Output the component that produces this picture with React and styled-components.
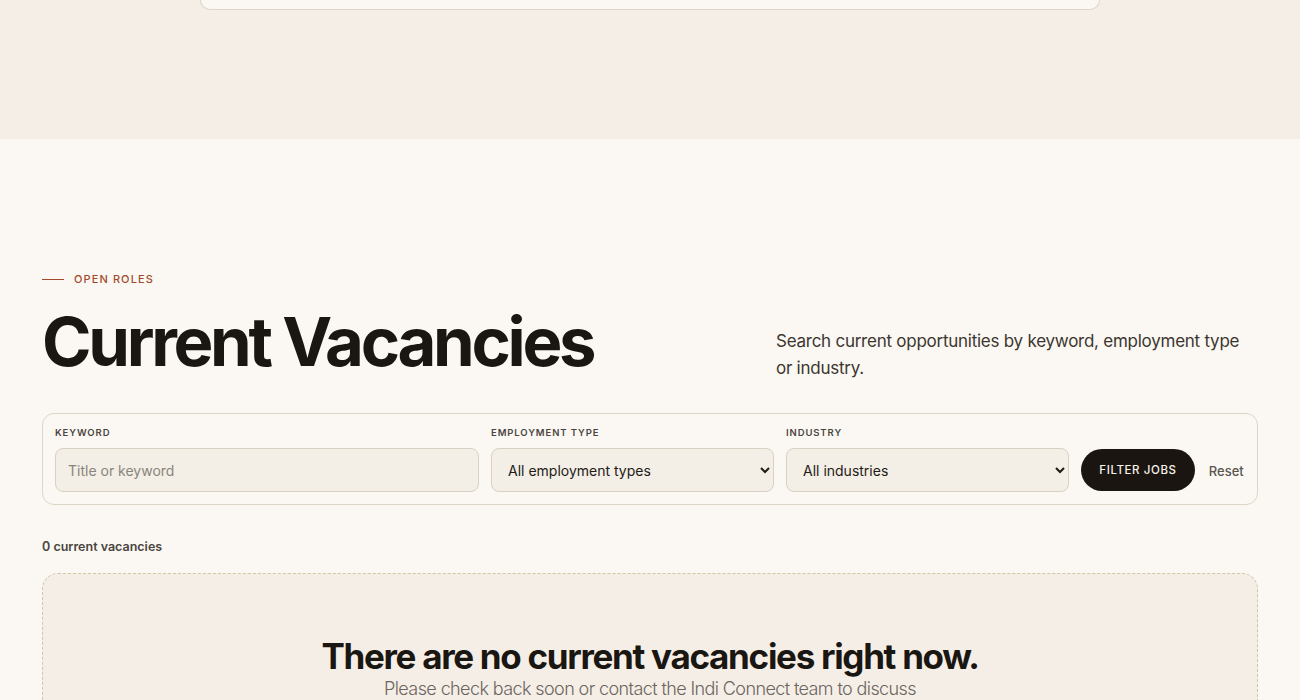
import React from "react";
import styled, { createGlobalStyle } from "styled-components";

const Global = createGlobalStyle`
  html, body { margin: 0; padding: 0; }
  body {
    background: #fbf8f3;
    font-family: Inter, "Noto Sans", sans-serif;
    color: #1a1612;
  }
  * { box-sizing: border-box; }
`;

const TopBand = styled.div`
  height: 139px;
  background: #f5eee7;
  display: flex;
  justify-content: center;
`;

const TopCard = styled.div`
  width: 900px;
  height: 10px;
  margin-left: -1px;
  background: #fbf8f3;
  border: 1px solid #dcd6c4;
  border-top: none;
  border-radius: 0 0 20px 20px;
`;

const Section = styled.section`
  padding: 131px 42px 0;
`;

const Eyebrow = styled.div`
  display: flex;
  align-items: center;
  gap: 10px;
  font-size: 11px;
  font-weight: 500;
  letter-spacing: 1.1px;
  color: #a24a2c;
  text-transform: uppercase;
  height: 18px;
`;

const EyebrowLine = styled.span`
  width: 22px;
  height: 1px;
  background: #a24a2c;
`;

const HeaderRow = styled.div`
  display: flex;
  justify-content: space-between;
  align-items: flex-start;
  margin-top: 14px;
`;

const Title = styled.h1`
  margin: 0;
  font-size: 67px;
  line-height: 80px;
  font-weight: 700;
  letter-spacing: -3.3px;
  color: #1a1612;
`;

const Lede = styled.p`
  margin: 26px 12px 0 0;
  width: 470px;
  font-size: 17px;
  line-height: 27px;
  color: #3b362f;
  letter-spacing: -0.25px;
`;

const FilterPanel = styled.form`
  margin-top: 31px;
  border: 1px solid #ddd6c6;
  border-radius: 12px;
  padding: 13px 12px 12px 12px;
  display: grid;
  grid-template-columns: 424px 283px 283px auto auto;
  column-gap: 12px;
  align-items: end;
`;

const Field = styled.label`
  display: flex;
  flex-direction: column;
  gap: 9px;
`;

const FieldLabel = styled.span`
  font-size: 9.5px;
  font-weight: 600;
  letter-spacing: 0.9px;
  text-transform: uppercase;
  color: #4a4540;
  line-height: 12px;
`;

const controlBase = `
  height: 44px;
  width: 100%;
  border: 1px solid #d9d1c1;
  border-radius: 8px;
  background: #f3eee6;
  font-family: Inter, "Noto Sans", sans-serif;
  font-size: 14px;
  color: #1f1b17;
  outline: none;
`;

const TextInput = styled.input`
  ${controlBase}
  padding: 0 12px;
  &::placeholder { color: #8a847b; }
`;

const Select = styled.select`
  ${controlBase}
  padding: 0 8px 0 12px;
`;

const FilterButton = styled.button`
  height: 42px;
  margin-bottom: 1px;
  padding: 0 18px;
  width: 114px;
  border: none;
  border-radius: 999px;
  background: #1a1511;
  color: #f7f2ea;
  font-family: Inter, "Noto Sans", sans-serif;
  font-size: 11.5px;
  font-weight: 500;
  letter-spacing: 0.6px;
  text-transform: uppercase;
`;

const ResetLink = styled.button`
  height: 42px;
  padding: 0 1px;
  border: none;
  background: none;
  color: #5a554e;
  font-family: Inter, "Noto Sans", sans-serif;
  font-size: 13px;
  font-weight: 500;
`;

const Count = styled.div`
  margin-top: 34px;
  font-size: 12.5px;
  font-weight: 600;
  color: #4a4540;
  line-height: 16px;
`;

const EmptyBox = styled.div`
  margin-top: 18px;
  min-height: 200px;
  border: 1px dashed #cfc8a8;
  border-radius: 16px;
  background: #f5eee7;
  padding: 62px 40px 40px;
  text-align: center;
`;

const EmptyTitle = styled.h2`
  margin: 0;
  font-size: 35px;
  line-height: 40px;
  font-weight: 700;
  letter-spacing: -1.3px;
  color: #1a1612;
`;

const EmptyText = styled.p`
  margin: 0;
  font-size: 18px;
  line-height: 26px;
  font-weight: 300;
  letter-spacing: -0.6px;
  color: #6b655d;
`;

export default function App() {
  return (
    <>
      <Global />
      <TopBand>
        <TopCard />
      </TopBand>
      <Section>
        <Eyebrow>
          <EyebrowLine />
          Open Roles
        </Eyebrow>
        <HeaderRow>
          <Title>Current Vacancies</Title>
          <Lede>
            Search current opportunities by keyword, employment type or industry.
          </Lede>
        </HeaderRow>
        <FilterPanel onSubmit={(e) => e.preventDefault()}>
          <Field>
            <FieldLabel>Keyword</FieldLabel>
            <TextInput placeholder="Title or keyword" />
          </Field>
          <Field>
            <FieldLabel>Employment type</FieldLabel>
            <Select defaultValue="all">
              <option value="all">All employment types</option>
            </Select>
          </Field>
          <Field>
            <FieldLabel>Industry</FieldLabel>
            <Select defaultValue="all">
              <option value="all">All industries</option>
            </Select>
          </Field>
          <FilterButton type="submit">Filter Jobs</FilterButton>
          <ResetLink type="button">Reset</ResetLink>
        </FilterPanel>
        <Count>0 current vacancies</Count>
        <EmptyBox>
          <EmptyTitle>There are no current vacancies right now.</EmptyTitle>
          <EmptyText>
            Please check back soon or contact the Indi Connect team to discuss
            <br />
            upcoming opportunities.
          </EmptyText>
        </EmptyBox>
      </Section>
    </>
  );
}
